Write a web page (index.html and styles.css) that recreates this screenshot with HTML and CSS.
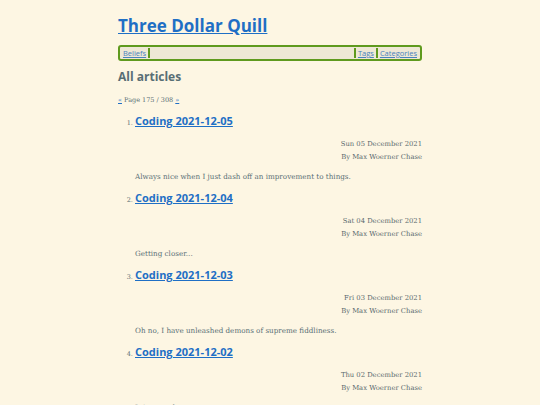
FILE: index.html
```html
<!DOCTYPE html>
<html>
<head>
<meta charset="utf-8">
<link rel="stylesheet" href="styles.css">
</head>
<body>
<div class="page">
  <header class="site-header">
    <h1 class="site-title"><a href="#">Three Dollar Quill</a></h1>
    <nav class="nav">
      <a href="#">Beliefs</a>
      <span class="sep"></span>
      <span class="spacer"></span>
      <span class="sep"></span>
      <a href="#">Tags</a>
      <span class="sep"></span>
      <a href="#">Categories</a>
    </nav>
  </header>
  <h2 class="section-title">All articles</h2>
  <p class="pager"><a href="#">«</a> Page 175 / 308 <a href="#">»</a></p>
  <ol class="articles">
    <li class="article">
      <h3 class="article-title"><a href="#">Coding 2021-12-05</a></h3>
      <div class="meta"><div>Sun 05 December 2021</div><div>By Max Woerner Chase</div></div>
      <p class="summary">Always nice when I just dash off an improvement to things.</p>
    </li>
    <li class="article">
      <h3 class="article-title"><a href="#">Coding 2021-12-04</a></h3>
      <div class="meta"><div>Sat 04 December 2021</div><div>By Max Woerner Chase</div></div>
      <p class="summary">Getting closer...</p>
    </li>
    <li class="article">
      <h3 class="article-title"><a href="#">Coding 2021-12-03</a></h3>
      <div class="meta"><div>Fri 03 December 2021</div><div>By Max Woerner Chase</div></div>
      <p class="summary">Oh no, I have unleashed demons of supreme fiddliness.</p>
    </li>
    <li class="article">
      <h3 class="article-title"><a href="#">Coding 2021-12-02</a></h3>
      <div class="meta"><div>Thu 02 December 2021</div><div>By Max Woerner Chase</div></div>
      <p class="summary">It just works.</p>
    </li>
  </ol>
</div>
</body>
</html>
```
FILE: styles.css
```css
html, body {
  margin: 0;
  padding: 0;
  background: #fdf6e3;
}
body {
  font-family: "DejaVu Serif", serif;
  color: #586e75;
  font-size: 7.5px;
}
.page {
  width: 304px;
  margin: 0 auto;
  padding-top: 14px;
}
a { color: #1f6fc5; }
.site-title {
  margin: 0;
  font-family: "Open Sans", sans-serif;
  font-weight: 700;
  font-size: 17px;
  line-height: 24px;
}
.nav {
  margin-top: 7px;
  display: flex;
  align-items: center;
  height: 12px;
  border: 2px solid #5f9a1e;
  border-radius: 3px;
  background: #eee8d5;
  padding: 0 2px;
  font-family: "Open Sans", sans-serif;
  font-size: 7.5px;
}
.nav a { color: #4a82bd; padding: 0 1px; }
.sep {
  width: 2px;
  height: 10px;
  background: #5f9a1e;
  margin: 0 1px;
}
.spacer { flex: 1; }
.section-title {
  margin: 8px 0 0;
  font-family: "Open Sans", sans-serif;
  font-size: 12px;
  line-height: 16px;
  color: #586e75;
}
.pager {
  margin: 10px 0 0;
  font-size: 6.5px;
  line-height: 10px;
}
.articles {
  margin: 7px 0 0;
  padding-left: 17px;
}
.article { font-size: 6.5px; }
.article-title {
  margin: 0;
  font-family: "Open Sans", sans-serif;
  font-size: 11px;
  line-height: 18px;
}
.meta {
  margin-top: 8px;
  text-align: right;
  font-size: 6.8px;
  line-height: 13px;
  color: #5a6a6e;
}
.summary {
  margin: 7px 0 0;
  font-size: 7.2px;
  line-height: 12px;
  padding-bottom: 6px;
}
```
